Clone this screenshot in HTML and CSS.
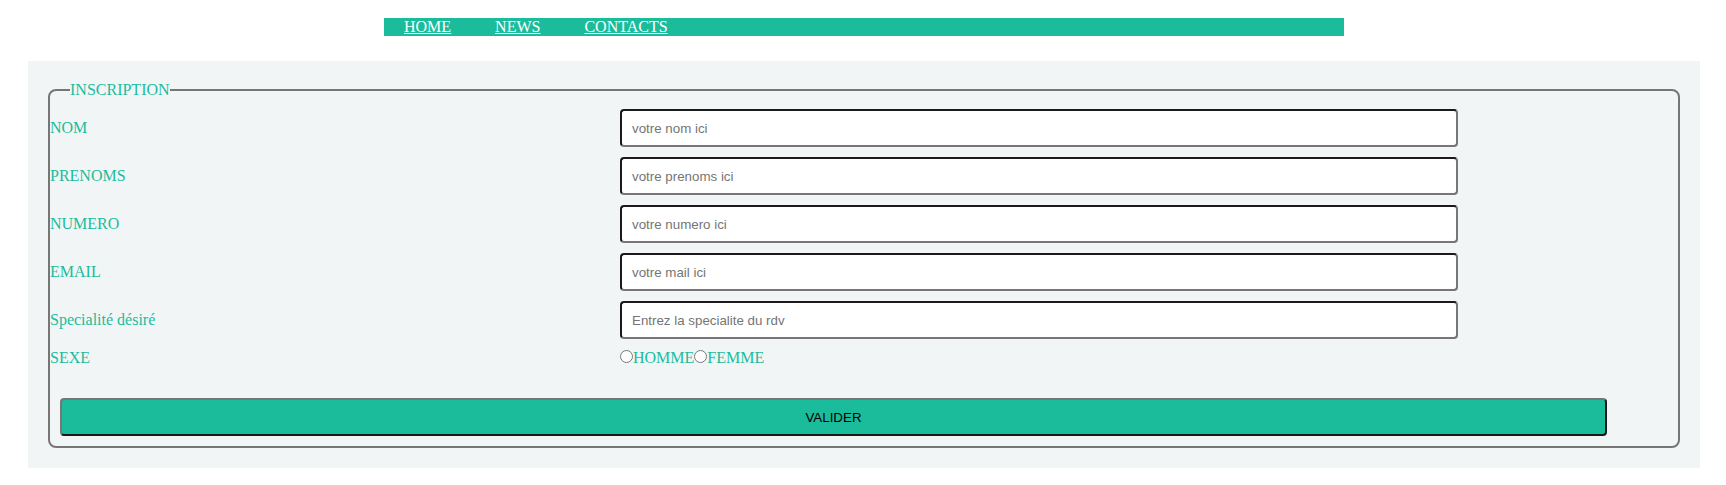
FILE: index.html
```html
<!DOCTYPE html>
<html lang="fr">
<head>
<meta charset="utf-8">
<title>Inscription</title>
<link rel="stylesheet" href="styles.css">
</head>
<body>
<nav class="nav">
  <a href="#" class="nav-link">HOME</a>
  <a href="#" class="nav-link">NEWS</a>
  <a href="#" class="nav-link">CONTACTS</a>
</nav>
<section class="panel">
  <form class="form">
    <fieldset class="fieldset">
      <legend class="legend">INSCRIPTION</legend>
      <div class="grid">
        <label class="label" for="nom">NOM</label>
        <input class="field" id="nom" type="text" placeholder="votre nom ici">
        <label class="label" for="prenoms">PRENOMS</label>
        <input class="field" id="prenoms" type="text" placeholder="votre prenoms ici">
        <label class="label" for="numero">NUMERO</label>
        <input class="field" id="numero" type="text" placeholder="votre numero ici">
        <label class="label" for="email">EMAIL</label>
        <input class="field" id="email" type="text" placeholder="votre mail ici">
        <label class="label" for="spec">Specialité désiré</label>
        <input class="field" id="spec" type="text" placeholder="Entrez la specialite du rdv">
        <span class="label">SEXE</span>
        <div class="radios"><input class="radio" type="radio" name="sexe" id="h"><label class="radio-label" for="h">HOMME</label><input class="radio" type="radio" name="sexe" id="f"><label class="radio-label" for="f">FEMME</label></div>
      </div>
      <button class="submit" type="button">VALIDER</button>
    </fieldset>
  </form>
</section>
</body>
</html>
```
FILE: styles.css
```css
html, body {
  margin: 0;
  padding: 0;
  background: #ffffff;
}
body {
  margin: 8px;
  font-family: "Liberation Serif", "Times New Roman", serif;
  font-size: 16px;
}
.nav {
  width: 960px;
  margin: 10px 0 0 calc(50% - 479px);
  height: 18px;
  background: #1abc9c;
  display: flex;
  gap: 44px;
  padding-left: 20px;
  box-sizing: border-box;
  line-height: 18px;
}
.nav-link {
  color: #ffffff;
  text-decoration: underline;
}
.panel {
  margin: 25px 18px 0 20px;
  padding: 20px;
  background: #f2f5f6;
}
.form {
  margin: 0;
}
.fieldset {
  margin: 0;
  padding: 10px 0 10px 0;
  border: 2px solid #767676;
  border-radius: 8px;
  min-width: 0;
}
.legend {
  margin-left: 20px;
  padding: 0;
  color: #1abc9c;
  line-height: 18px;
}
.grid {
  display: grid;
  grid-template-columns: 570px 838px;
  row-gap: 10px;
  align-items: center;
}
.label {
  color: #1abc9c;
  line-height: 18px;
}
.field {
  box-sizing: border-box;
  width: 838px;
  height: 38px;
  margin: 0;
  padding: 0 10px;
  border: 2px solid;
  border-color: #1a1a1a #767676 #767676 #1a1a1a;
  border-radius: 4px;
  background: #ffffff;
  font-family: "Liberation Sans", Arial, sans-serif;
  font-size: 13.333px;
  outline: none;
}
.field::placeholder {
  color: #757575;
}
.radios {
  line-height: 18px;
  height: 18px;
}
.radio {
  width: 13px;
  height: 13px;
  margin: 0;
  vertical-align: baseline;
}
.radio-label {
  color: #1abc9c;
}
.submit {
  display: block;
  box-sizing: border-box;
  margin: 31px 0 0 10px;
  width: 1547px;
  height: 38px;
  border: 2px solid;
  border-color: #767676 #1a1a1a #1a1a1a #767676;
  border-radius: 4px;
  background: #1abc9c;
  color: #000000;
  font-family: "Liberation Sans", Arial, sans-serif;
  font-size: 13.333px;
  padding: 0;
}
```
